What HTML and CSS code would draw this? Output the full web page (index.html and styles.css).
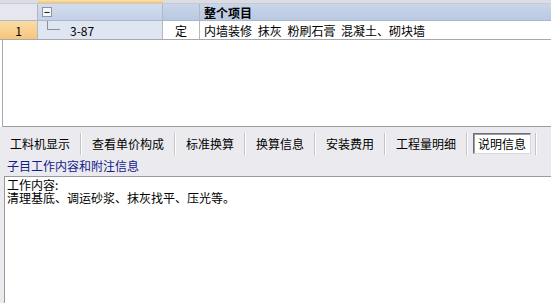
FILE: index.html
```html
<!DOCTYPE html>
<html lang="zh">
<head>
    <meta charset="UTF-8">
    <title>说明信息</title>
    <link rel="stylesheet" href="styles.css">
</head>
<body>
    <div class="grid">
        <div class="grid-top">
            <div class="gt-num"></div>
            <div class="gt-sel"></div>
            <div class="gt-rest"></div>
        </div>
        <div class="row head">
            <div class="cell c-num"></div>
            <div class="cell c-code"><span class="fold">−</span></div>
            <div class="cell c-unit"></div>
            <div class="cell c-name"><b>整个项目</b></div>
        </div>
        <div class="row data">
            <div class="cell c-num sel">1</div>
            <div class="cell c-code">
                <span class="tree"></span>
                <span class="code">3-87</span>
            </div>
            <div class="cell c-unit">定</div>
            <div class="cell c-name">内墙装修 抹灰 粉刷石膏 混凝土、砌块墙</div>
        </div>
        <div class="grid-empty"></div>
    </div>

    <div class="tabs">
        <span class="tab">工料机显示</span><i class="sep"></i>
        <span class="tab">查看单价构成</span><i class="sep"></i>
        <span class="tab">标准换算</span><i class="sep"></i>
        <span class="tab">换算信息</span><i class="sep"></i>
        <span class="tab">安装费用</span><i class="sep"></i>
        <span class="tab">工程量明细</span><i class="sep"></i>
        <span class="tab active">说明信息</span><i class="sep"></i>
    </div>

    <div class="caption">子目工作内容和附注信息</div>

    <div class="memo">
        <div class="line">工作内容:</div>
        <div class="line">清理基底、调运砂浆、抹灰找平、压光等。</div>
    </div>
</body>
</html>
```

FILE: styles.css
```css
* {
    margin: 0;
    padding: 0;
    box-sizing: border-box;
}

body {
    width: 551px;
    height: 303px;
    overflow: hidden;
    background: #ebebef;
    font-family: 'Noto Sans CJK SC', 'DejaVu Sans', sans-serif;
    font-size: 12px;
    color: #000;
}

/* grid */
.grid {
    background: #fff;
}

.grid-top {
    display: flex;
    height: 4px;
    background: #dcdce4;
    border-bottom: 1px solid #c9c9d4;
}

.gt-num {
    width: 38px;
}

.gt-sel {
    width: 125px;
    background: linear-gradient(#fbe2ab, #f4c470);
}

.gt-rest {
    flex: 1;
}

.row {
    display: flex;
}

.cell {
    display: flex;
    align-items: center;
    border-right: 1px solid #b4b8c4;
    white-space: nowrap;
    overflow: hidden;
}

.c-num {
    width: 38px;
    justify-content: center;
}

.c-code {
    width: 125px;
}

.c-unit {
    width: 37px;
    justify-content: center;
}

.c-name {
    flex: 1;
    padding-left: 4px;
    border-right: none;
    word-spacing: 3px;
}

.head {
    height: 17px;
    background: linear-gradient(#c9d6ea, #b9c9e2);
    border-bottom: 1px solid #a9b6cc;
}

.head .c-num {
    background: #e6e6ee;
}

.head .c-code {
    background: linear-gradient(#d3ddee, #c3d0e6);
}

.fold {
    width: 10px;
    height: 10px;
    margin-left: 4px;
    border: 1px solid #8d96a8;
    background: #f4f6fa;
    font-size: 10px;
    line-height: 7px;
    text-align: center;
    font-weight: bold;
    color: #222;
}

.data {
    height: 19px;
    border-bottom: 1px solid #a8a8b0;
}

.data .c-num {
    background: linear-gradient(#fbdca4, #f6c67c);
}

.data .c-code {
    background: #dfe6f1;
}

.tree {
    width: 13px;
    height: 9px;
    margin-left: 9px;
    align-self: flex-start;
    border-left: 1px solid #8e8e96;
    border-bottom: 1px solid #8e8e96;
}

.code {
    margin-left: 10px;
}

.grid-empty {
    height: 87px;
    margin-left: 2px;
    border-left: 1px solid #a8a8b0;
    border-bottom: 1px solid #9c9ca4;
}

/* tabs */
.tabs {
    display: flex;
    align-items: center;
    height: 31px;
    padding-left: 4px;
    padding-top: 2px;
}

.tab {
    padding: 0 5px;
    border: 1px solid transparent;
    line-height: 19px;
}

.tab.active {
    padding: 0 4px;
    margin-left: 1px;
    background: #fff;
    border-color: #6e6e76 #d8d8dc #d8d8dc #6e6e76;
    box-shadow: inset 1px 1px 0 #9c9ca4;
}

.sep {
    width: 2px;
    height: 22px;
    margin: 0 4px;
    border-left: 1px solid #c4c4ca;
    border-right: 1px solid #fff;
}

/* caption */
.caption {
    height: 18px;
    line-height: 16px;
    padding-left: 7px;
    color: #14208a;
}

.memo {
    height: 130px;
    margin-left: 4px;
    padding: 1px 2px;
    background: #fff;
    border-top: 1px solid #9a9a9a;
    border-left: 1px solid #9a9a9a;
}

.line {
    height: 13px;
    line-height: 13px;
}
```
